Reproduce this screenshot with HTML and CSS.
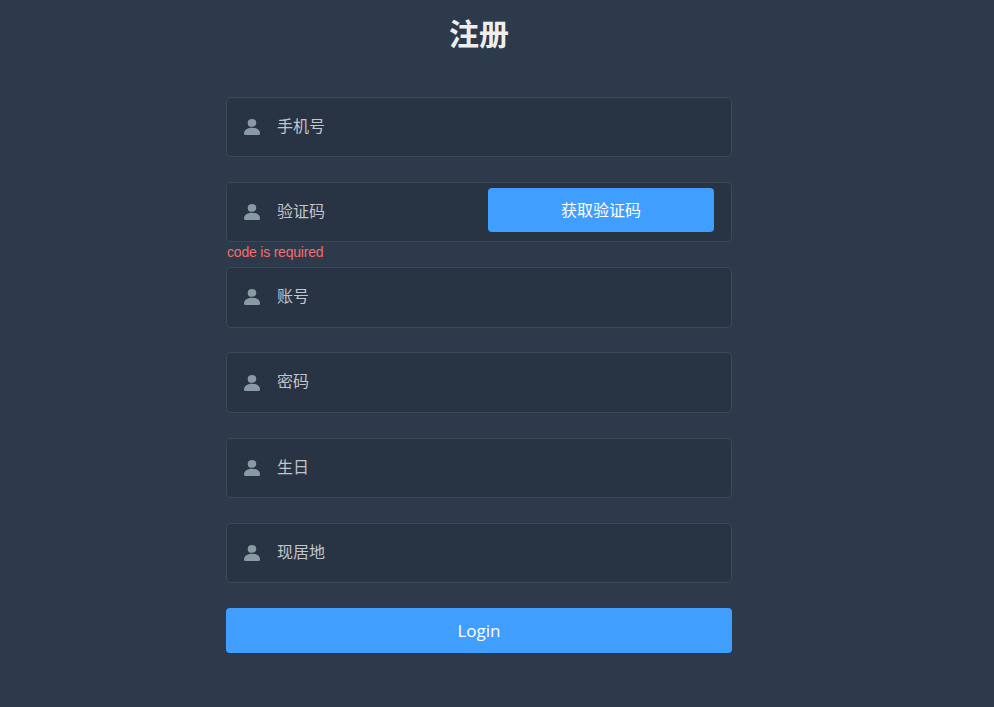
FILE: index.html
```html
<!DOCTYPE html>
<html lang="zh-CN">

<head>
    <meta charset="UTF-8">
    <meta name="viewport" content="width=device-width, initial-scale=1.0">
    <title>注册</title>
    <link rel="stylesheet" href="styles.css">
</head>

<body>

    <svg class="icon-defs" width="0" height="0">
        <symbol id="icon-user" viewBox="0 0 16 16">
            <ellipse cx="8" cy="3.9" rx="4.3" ry="3.9" />
            <path d="M0 14.4C0 11 3.2 8.7 8 8.7s8 2.3 8 5.7c0 1-.6 1.6-1.6 1.6H1.6C.6 16 0 15.4 0 14.4z" />
        </symbol>
    </svg>

    <div class="register-container">
        <form class="register-form">
            <h3 class="title">注册</h3>

            <div class="form-item">
                <div class="field">
                    <svg class="field-icon"><use href="#icon-user"></use></svg>
                    <input type="text" placeholder="手机号">
                </div>
            </div>

            <div class="form-item">
                <div class="field">
                    <svg class="field-icon"><use href="#icon-user"></use></svg>
                    <input type="text" placeholder="验证码">
                    <button type="button" class="code-button">获取验证码</button>
                </div>
                <div class="form-error">code is required</div>
            </div>

            <div class="form-item">
                <div class="field">
                    <svg class="field-icon"><use href="#icon-user"></use></svg>
                    <input type="text" placeholder="账号">
                </div>
            </div>

            <div class="form-item">
                <div class="field">
                    <svg class="field-icon"><use href="#icon-user"></use></svg>
                    <input type="password" placeholder="密码">
                </div>
            </div>

            <div class="form-item">
                <div class="field">
                    <svg class="field-icon"><use href="#icon-user"></use></svg>
                    <input type="text" placeholder="生日">
                </div>
            </div>

            <div class="form-item">
                <div class="field">
                    <svg class="field-icon"><use href="#icon-user"></use></svg>
                    <input type="text" placeholder="现居地">
                </div>
            </div>

            <button type="button" class="login-button">Login</button>
        </form>
    </div>

</body>

</html>
```

FILE: styles.css
```css
* {
    box-sizing: border-box;
}

html,
body {
    height: 100%;
}

body {
    margin: 0;
    background-color: #2d3a4b;
    font-family: "Open Sans", "Noto Sans CJK SC", sans-serif;
    overflow: hidden;
}

.icon-defs {
    display: block;
    height: 0;
}

.register-container {
    padding-right: 36px;
}

.register-form {
    width: 506px;
    margin: 0 auto;
}

.title {
    margin: 0;
    padding-top: 14px;
    height: 96.8px;
    font-size: 30px;
    line-height: 40px;
    font-weight: bold;
    color: #eee;
    text-align: center;
}

.form-item {
    position: relative;
    margin-bottom: 24.8px;
}

.field {
    display: flex;
    align-items: center;
    height: 60.4px;
    background-color: rgba(0, 0, 0, 0.1);
    border: 1px solid rgba(255, 255, 255, 0.1);
    border-radius: 5px;
    padding-right: 17px;
}

.field-icon {
    width: 16px;
    height: 16px;
    margin: 0 0 0 17px;
    flex-shrink: 0;
    fill: #889aa4;
}

.field input {
    flex: 1;
    min-width: 0;
    height: 47px;
    padding: 0 15px 2.4px 17px;
    background: transparent;
    border: none;
    outline: none;
    font-family: inherit;
    font-size: 16px;
    color: #eee;
}

.field input::placeholder {
    color: #c0c4cc;
    opacity: 1;
}

.code-button {
    width: 226px;
    height: 44px;
    margin-bottom: 4px;
    padding: 0 0 2px;
    flex-shrink: 0;
    background-color: #409eff;
    color: #fff;
    border: none;
    border-radius: 4px;
    font-family: inherit;
    font-size: 16px;
    cursor: pointer;
}

.form-error {
    position: absolute;
    top: 100%;
    left: 1px;
    padding-top: 1px;
    font-family: "Liberation Sans", Arial, sans-serif;
    font-size: 14px;
    line-height: 18px;
    letter-spacing: -0.2px;
    color: #f56c6c;
}

.login-button {
    display: block;
    width: 100%;
    height: 45px;
    background-color: #409eff;
    color: #fff;
    border: none;
    border-radius: 4px;
    font-family: inherit;
    font-size: 17px;
    cursor: pointer;
}
```
